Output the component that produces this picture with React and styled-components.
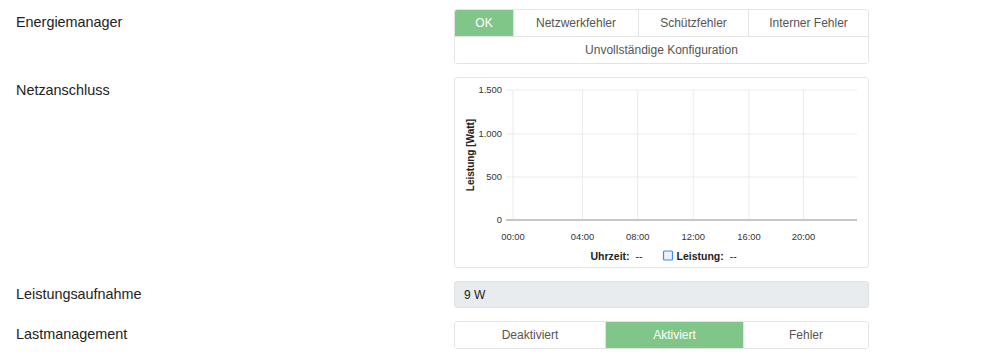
import React from "react";
import styled, { createGlobalStyle } from "styled-components";

const GlobalStyle = createGlobalStyle`
  body {
    margin: 0;
    background: #fff;
    font-family: "Liberation Sans", Arial, sans-serif;
    color: #222;
  }
`;

const Page = styled.div`
  display: flex;
  flex-direction: column;
  gap: 13px;
  padding: 9px 0 0 16px;
  width: 1000px;
  height: 360px;
  box-sizing: border-box;
`;

const Row = styled.div`
  display: grid;
  grid-template-columns: 438px 415px;
`;

const Label = styled.div`
  font-size: 14.4px;
  line-height: 27px;
  color: #222;
`;

const Group = styled.div`
  display: grid;
  grid-template-columns: ${(p) => p.$cols};
  border: 1px solid #e4e4e4;
  border-radius: 3px;
  overflow: hidden;
`;

const Option = styled.div`
  grid-column: ${(p) => p.$span || "auto"};
  height: ${(p) => p.$h || 26}px;
  display: flex;
  align-items: center;
  justify-content: center;
  font-size: 12px;
  color: ${(p) => (p.$active ? "#fff" : "#555")};
  background: ${(p) => (p.$active ? "#80c689" : "#fff")};
  border-left: ${(p) => (p.$first ? "none" : "1px solid #e4e4e4")};
  border-top: ${(p) => (p.$top ? "1px solid #e4e4e4" : "none")};
`;

const Card = styled.div`
  height: 191px;
  border: 1px solid #e6e6e6;
  border-radius: 3px;
  box-sizing: border-box;
  overflow: hidden;
`;

const ValueBox = styled.div`
  height: 27px;
  box-sizing: border-box;
  background: #e9ecef;
  border: 1px solid #dfe2e6;
  border-radius: 3px;
  padding: 0 9px;
  display: flex;
  align-items: center;
  font-size: 12px;
  color: #222;
`;

const yTicks = [
  { v: "1.500", y: 13 },
  { v: "1.000", y: 57 },
  { v: "500", y: 100 },
  { v: "0", y: 143 },
];
const xTicks = [
  { v: "00:00", x: 59 },
  { v: "04:00", x: 128.5 },
  { v: "08:00", x: 183.7 },
  { v: "12:00", x: 239.3 },
  { v: "16:00", x: 295 },
  { v: "20:00", x: 349.5 },
];

const Chart = () => (
  <svg width="413" height="189" viewBox="1 1 413 189" fontFamily="Liberation Sans, Arial, sans-serif">
    {yTicks.map((t) => (
      <g key={t.v}>
        <line x1="52" x2="403" y1={t.y} y2={t.y} stroke="#ebebeb" strokeWidth="1" />
        <text x="48" y={t.y + 3.3} fontSize="9.4" textAnchor="end" fill="#333">
          {t.v}
        </text>
      </g>
    ))}
    {xTicks.map((t) => (
      <g key={t.v}>
        <line x1={t.x} x2={t.x} y1="13" y2="143" stroke="#ebebeb" strokeWidth="1" />
        <text x={t.x} y="163.3" fontSize="9.4" textAnchor="middle" fill="#333">
          {t.v}
        </text>
      </g>
    ))}
    <line x1="52" x2="403" y1="143" y2="143" stroke="#c6c6c6" strokeWidth="2" />
    <text
      x="0"
      y="0"
      fontSize="10"
      fontWeight="bold"
      textAnchor="middle"
      fill="#222"
      transform="translate(20 78) rotate(-90)"
    >
      Leistung [Watt]
    </text>
    <text x="136.5" y="182.5" fontSize="10.5" fill="#222">
      <tspan fontWeight="bold">Uhrzeit:</tspan>
      <tspan dx="6">--</tspan>
    </text>
    <rect x="209.5" y="174" width="9" height="9" fill="#e8f1fc" stroke="#3d8ee8" strokeWidth="1.2" rx="1" />
    <text x="222.5" y="182.5" fontSize="10.5" fill="#222">
      <tspan fontWeight="bold">Leistung:</tspan>
      <tspan dx="6">--</tspan>
    </text>
  </svg>
);

export default function App() {
  return (
    <>
      <GlobalStyle />
      <Page>
        <Row>
          <Label>Energiemanager</Label>
          <Group $cols="58px 125px 110px 1fr">
            <Option $first $active>OK</Option>
            <Option>Netzwerkfehler</Option>
            <Option>Schützfehler</Option>
            <Option>Interner Fehler</Option>
            <Option $first $top $span="1 / -1">
              Unvollständige Konfiguration
            </Option>
          </Group>
        </Row>
        <Row>
          <Label>Netzanschluss</Label>
          <Card>
            <Chart />
          </Card>
        </Row>
        <Row>
          <Label>Leistungsaufnahme</Label>
          <ValueBox>9 W</ValueBox>
        </Row>
        <Row>
          <Label>Lastmanagement</Label>
          <Group $cols="150px 138px 1fr">
            <Option $first>Deaktiviert</Option>
            <Option $active>Aktiviert</Option>
            <Option>Fehler</Option>
          </Group>
        </Row>
      </Page>
    </>
  );
}
